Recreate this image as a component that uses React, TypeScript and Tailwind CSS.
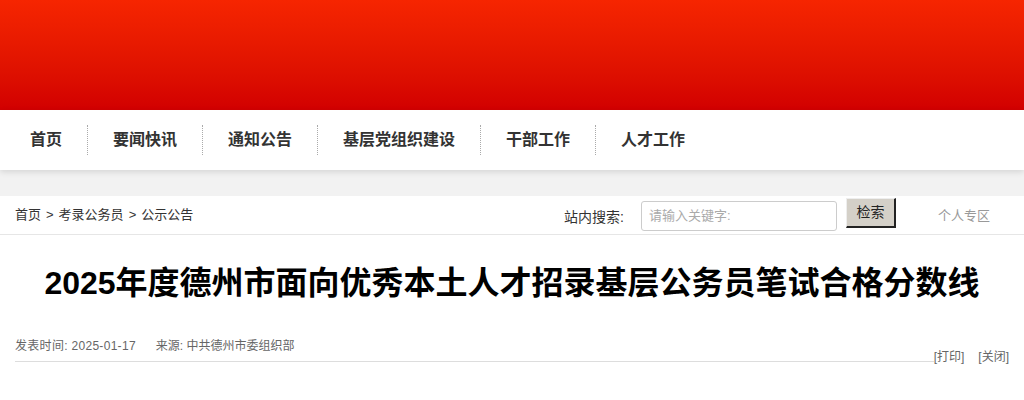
import React from "react";

const cjk = { fontFamily: '"Liberation Sans", "Noto Sans CJK SC", sans-serif' };

export default function App() {
  const nav = ["首页", "要闻快讯", "通知公告", "基层党组织建设", "干部工作", "人才工作"];
  return (
    <div className="w-[1024px] h-[400px] bg-white overflow-hidden" style={cjk}>
      <div className="h-[110px] bg-gradient-to-b from-[#f62500] to-[#d20000]" />
      <div className="relative z-10 h-[60px] bg-white flex items-center pl-[5px] shadow-[0_2px_6px_rgba(0,0,0,0.12)]">
        {nav.map((n, i) => (
          <div
            key={n}
            className={
              "px-[25px] h-[30px] flex items-center text-[16px] font-bold text-[#333] " +
              (i < nav.length - 1 ? "border-r border-dotted border-[#aaa]" : "")
            }
          >
            {n}
          </div>
        ))}
      </div>
      <div className="h-[26px] bg-[#f2f2f2]" />
      <div className="h-[39px] flex items-center border-b border-[#e6e6e6] pl-[15px]">
        <div className="text-[13px] text-[#333] flex-1 flex gap-[5px]">
          <span>首页</span>
          <span>&gt;</span>
          <span>考录公务员</span>
          <span>&gt;</span>
          <span>公示公告</span>
        </div>
        <div className="text-[14px] text-[#333] mr-[17px] mt-[4px]">站内搜索:</div>
        <div className="w-[196px] h-[30px] border border-[#ccc] rounded-[3px] flex items-center px-[7px] text-[13px] text-[#aaa] mt-[1px]">
          请输入关键字:
        </div>
        <div className="ml-[9px] w-[50px] h-[30px] bg-[#d4d0c8] border-t border-l border-t-[#eee] border-l-[#eee] border-r-2 border-b-2 border-r-[#222] border-b-[#222] flex items-center justify-center text-[14px] text-[#222] mb-[4px]">
          检索
        </div>
        <div className="ml-[42px] w-[86px] text-[13px] text-[#999] mt-[2px]">个人专区</div>
      </div>
      <div className="h-[100px] flex items-center justify-center pb-[4px]">
        <h1 className="text-[32px] font-bold text-black">
          2025年度德州市面向优秀本土人才招录基层公务员笔试合格分数线
        </h1>
      </div>
      <div className="flex items-end pl-[15px] pr-[15px] mt-[2px]">
        <div className="flex-1 border-b border-[#ddd] pb-[6px] text-[12px] text-[#666] flex">
          <span className="tracking-[0.3px]">发表时间: 2025-01-17</span>
          <span className="ml-[20px]">来源: 中共德州市委组织部</span>
        </div>
        <div className="text-[12px] text-[#666] flex gap-[14px] translate-y-[4px]">
          <span>[打印]</span>
          <span>[关闭]</span>
        </div>
      </div>
    </div>
  );
}
